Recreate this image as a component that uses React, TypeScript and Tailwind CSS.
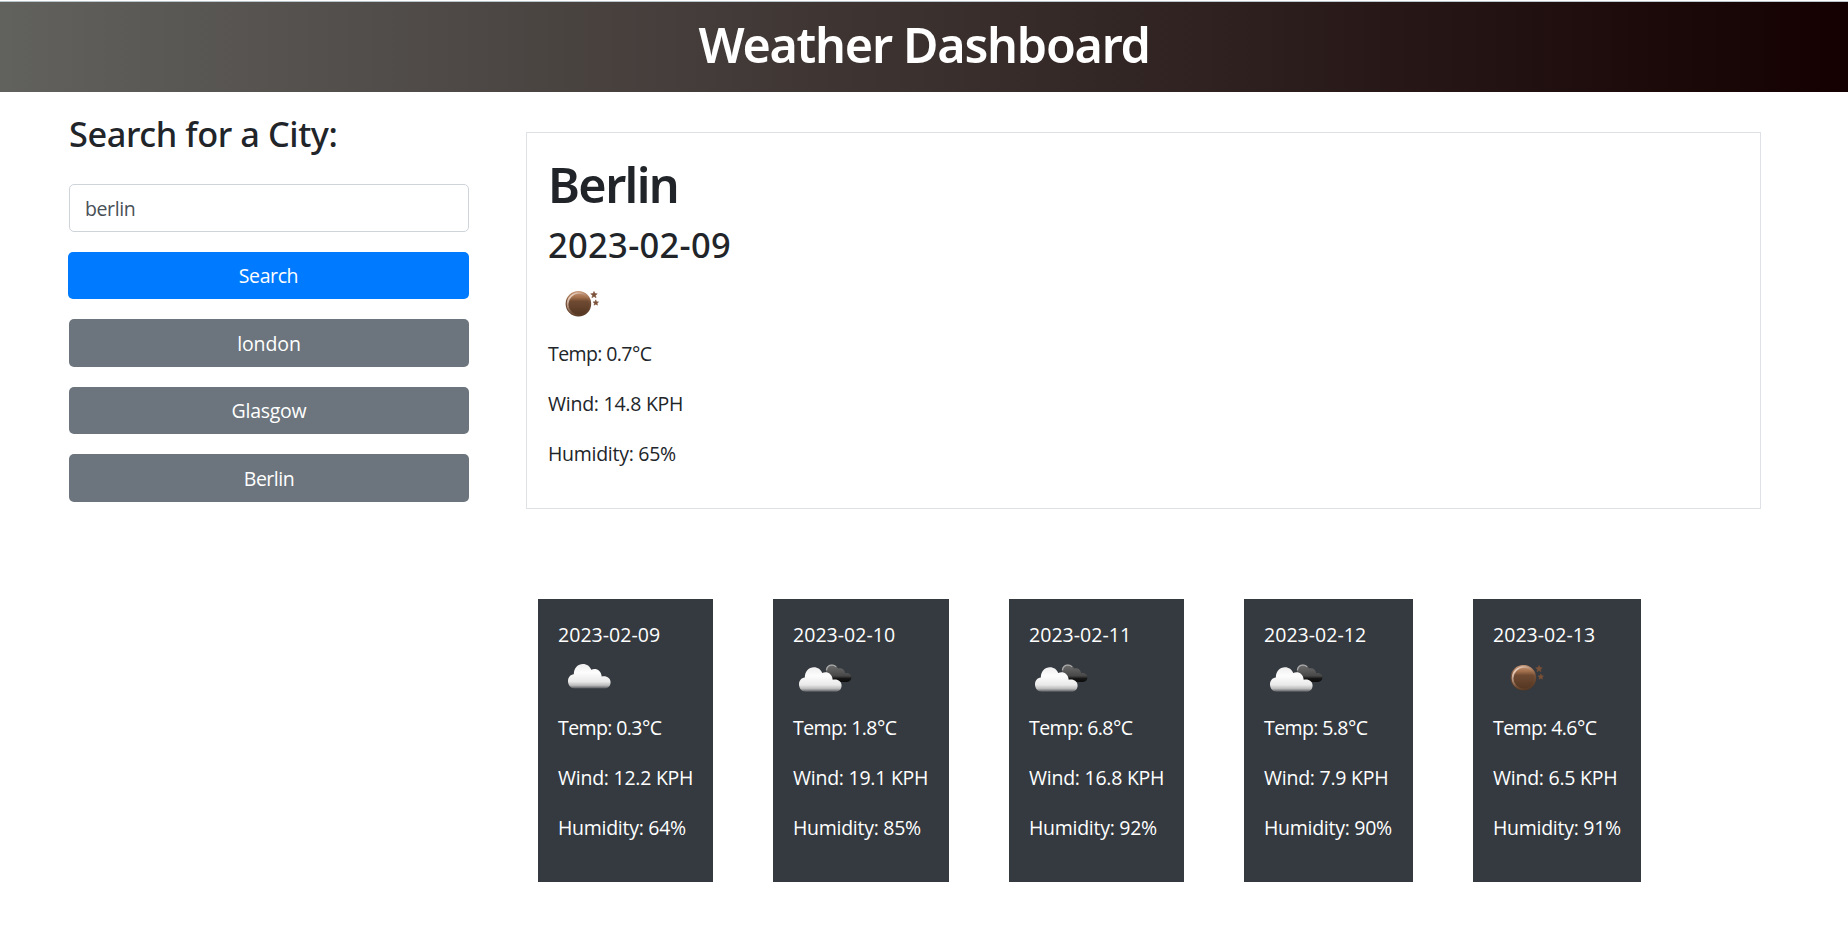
type IconKind = "moon" | "cloud" | "broken";

interface Day {
  date: string;
  icon: IconKind;
  temp: string;
  wind: string;
  humidity: string;
  size: string;
}

const days: Day[] = [
  { date: "2023-02-09", icon: "cloud", temp: "0.3", wind: "12.2", humidity: "64", size: "w-[175px] mr-[60px]" },
  { date: "2023-02-10", icon: "broken", temp: "1.8", wind: "19.1", humidity: "85", size: "w-[176px] mr-[60px]" },
  { date: "2023-02-11", icon: "broken", temp: "6.8", wind: "16.8", humidity: "92", size: "w-[175px] mr-[60px]" },
  { date: "2023-02-12", icon: "broken", temp: "5.8", wind: "7.9", humidity: "90", size: "w-[169px] mr-[60px]" },
  { date: "2023-02-13", icon: "moon", temp: "4.6", wind: "6.5", humidity: "91", size: "w-[168px]" },
];

const history = [
  { name: "london", style: "mt-5 h-[48px] pt-[2px] tracking-[-0.1px]" },
  { name: "Glasgow", style: "mt-5 h-[47px] tracking-[-0.25px]" },
  { name: "Berlin", style: "mt-5 h-[48px] pt-[2px] tracking-[-0.5px]" },
];

const CLOUD =
  "M17 39.5 C12.5 39.5 10 36 10 32 C10 28.3 12.3 25.6 15.8 25.2 C15.8 19 20 15 24.8 15 C29 15 32 17.3 33.2 20.8 C37.6 18.6 43.2 21 43.7 27.5 C48.5 26.4 52.6 29 52.6 33.2 C52.6 37 50 39.5 46.5 39.5 Z";

function WeatherIcon({ kind, id }: { kind: IconKind; id: string }) {
  return (
    <svg viewBox="0 0 63 63" className="-mt-px mb-px block h-[63px] w-[63px]">
      <defs>
        <linearGradient id={`${id}-white`} x1="0" y1="0" x2="0" y2="1">
          <stop offset="0" stopColor="#f0eeef" />
          <stop offset="0.35" stopColor="#fdfdfd" />
          <stop offset="0.72" stopColor="#e9e9e9" />
          <stop offset="0.87" stopColor="#bcbcbd" />
          <stop offset="1" stopColor="#55575b" />
        </linearGradient>
        <linearGradient id={`${id}-dark`} x1="0" y1="0" x2="0" y2="1">
          <stop offset="0" stopColor="#6e6e6e" />
          <stop offset="0.65" stopColor="#484848" />
          <stop offset="0.8" stopColor="#161616" />
          <stop offset="1" stopColor="#0b0b0b" />
        </linearGradient>
        <linearGradient id={`${id}-moon`} x1="0" y1="0" x2="0" y2="1">
          <stop offset="0" stopColor="#c99a7b" />
          <stop offset="0.25" stopColor="#a26f4c" />
          <stop offset="0.4" stopColor="#6f4a32" />
          <stop offset="1" stopColor="#513420" />
        </linearGradient>
        <linearGradient id={`${id}-rim`} x1="0" y1="0" x2="1" y2="1">
          <stop offset="0.1" stopColor="#f3ddd0" />
          <stop offset="0.55" stopColor="#a57a5d" stopOpacity="0.3" />
          <stop offset="1" stopColor="#6a452d" stopOpacity="0" />
        </linearGradient>
      </defs>
      {kind === "moon" && (
        <g>
          <circle cx="30.4" cy="28.8" r="12.8" fill={`url(#${id}-moon)`} />
          <circle cx="30.8" cy="29.2" r="11.2" fill="none" stroke={`url(#${id}-rim)`} strokeWidth="1.7" />
          <path d="M46 16.4l1 2.2 2.3.2-1.8 1.5.6 2.4-2.1-1.2-2.1 1.2.6-2.4-1.8-1.5 2.3-.2z" fill="#7b5138" stroke="#7b5138" strokeWidth="0.5" />
          <path d="M47.8 24.8l.8 1.9 2 .2-1.5 1.3.4 2-1.7-1-1.8 1 .5-2-1.5-1.3 2-.2z" fill="#7b5138" stroke="#7b5138" strokeWidth="0.5" />
        </g>
      )}
      {kind === "cloud" && <path d={CLOUD} fill={`url(#${id}-white)`} />}
      {kind === "broken" && (
        <g>
          <path
            d="M33 23 C32.4 18.5 35 15.6 39 15.6 C41.8 15.6 43.7 16.8 45 19.4 C48.6 18.4 51.8 20.4 52.2 24.2 C55.6 23.6 58.4 25.6 58.4 28.6 C58.4 31.4 56.4 33 54 33 L36 33 Z"
            fill={`url(#${id}-dark)`}
          />
          <path d="M33.4 21.4 C33.8 17.8 36.2 16.1 39 16.1 C40.7 16.1 42 16.6 43 17.8" fill="none" stroke="#a8a8a8" strokeWidth="1.3" />
          <path d={CLOUD} transform="translate(-4 3.3)" fill={`url(#${id}-white)`} />
        </g>
      )}
    </svg>
  );
}

function Readings({ temp, wind, humidity }: { temp: string; wind: string; humidity: string }) {
  return (
    <div className="flex flex-col gap-5 whitespace-nowrap">
      <p className="tracking-[-0.6px]">Temp: {temp}°C</p>
      <p className="tracking-[-0.25px]">Wind: {wind} KPH</p>
      <p className="tracking-[-0.28px]">Humidity: {humidity}%</p>
    </div>
  );
}

export default function App() {
  return (
    <div className="h-[932px] overflow-hidden bg-white font-['Open_Sans','Noto_Sans',sans-serif] text-[19.5px] leading-[30px] text-[#212529]">
      <div className="h-[2px] border-b border-[#b9c4cb] bg-white" />
      <header className="h-[90px] bg-[linear-gradient(90deg,#61615d,#140000)] pt-3 text-center">
        <h1 className="font-['Noto_Sans',sans-serif] text-[48.5px] leading-[60px] font-semibold tracking-[-1.25px] text-white">
          Weather Dashboard
        </h1>
      </header>

      <div className="flex">
        <aside className="ml-[68px] w-[401px] pt-[21px]">
          <h2 className="ml-px font-['Noto_Sans',sans-serif] text-[34.3px] leading-[42px] font-medium tracking-[-0.42px]">
            Search for a City:
          </h2>
          <input
            type="text"
            defaultValue="berlin"
            className="mt-[29px] ml-px block h-[48px] w-[400px] rounded-[5px] border border-[#ced4da] bg-white px-[15px] tracking-[-0.4px] text-[#495057] outline-none"
          />
          <button className="mt-5 block h-[47px] w-full rounded-[5px] bg-[#007bff] tracking-[-0.4px] text-white">Search</button>
          {history.map((h) => (
            <button key={h.name} className={`ml-px block w-[400px] rounded-[5px] bg-[#6c757d] text-white ${h.style}`}>
              {h.name}
            </button>
          ))}
        </aside>

        <main className="ml-[57px] w-[1235px] pt-10">
          <section className="h-[377px] border border-[#dee2e6] px-[21px] pt-[21px]">
            <h1 className="font-['Noto_Sans',sans-serif] text-[48.5px] leading-[60px] font-semibold tracking-[-1.6px]">Berlin</h1>
            <h2 className="mt-[10px] mb-[10px] font-['Noto_Sans',sans-serif] text-[34.5px] leading-[42px] font-medium tracking-[0.3px]">
              2023-02-09
            </h2>
            <WeatherIcon kind="moon" id="today" />
            <Readings temp="0.7" wind="14.8" humidity="65" />
          </section>

          <section className="mt-[90px] ml-3 flex">
            {days.map((d) => (
              <article key={d.date} className={`h-[283px] shrink-0 bg-[#343a40] px-5 pt-[21px] text-white ${d.size}`}>
                <p className="tracking-[0.04px]">{d.date}</p>
                <WeatherIcon kind={d.icon} id={`d${d.date}`} />
                <Readings temp={d.temp} wind={d.wind} humidity={d.humidity} />
              </article>
            ))}
          </section>
        </main>
      </div>
    </div>
  );
}
